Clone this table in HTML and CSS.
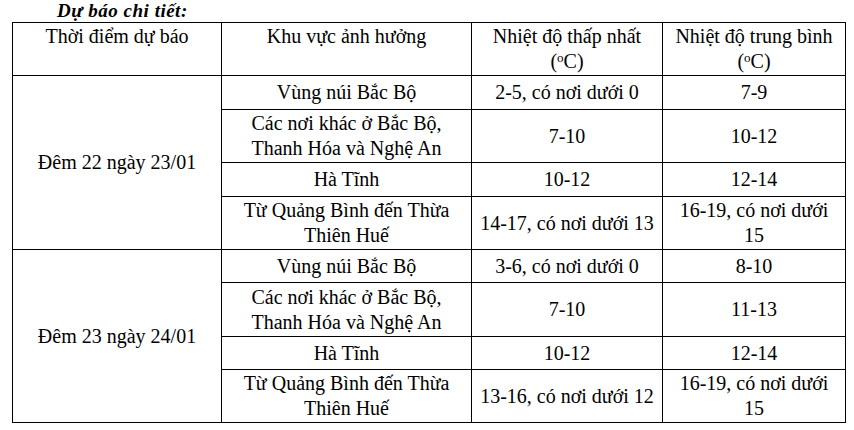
FILE: index.html
```html
<!DOCTYPE html>
<html lang="vi">
<head>
<meta charset="utf-8">
<title>Dự báo chi tiết</title>
<link rel="stylesheet" href="styles.css">
</head>
<body>
<div class="page">
  <p class="title">Dự báo chi tiết:</p>
  <table class="forecast">
    <colgroup>
      <col class="c1"><col class="c2"><col class="c3"><col class="c4">
    </colgroup>
    <tr class="head">
      <th>Thời điểm dự báo</th>
      <th>Khu vực ảnh hưởng</th>
      <th>Nhiệt độ thấp nhất<br>(<sup>o</sup>C)</th>
      <th>Nhiệt độ trung bình<br>(<sup>o</sup>C)</th>
    </tr>
    <tr class="r1">
      <td rowspan="4">Đêm 22 ngày 23/01</td>
      <td>Vùng núi Bắc Bộ</td>
      <td>2-5, có nơi dưới 0</td>
      <td>7-9</td>
    </tr>
    <tr class="r2">
      <td>Các nơi khác ở Bắc Bộ,<br>Thanh Hóa và Nghệ An</td>
      <td>7-10</td>
      <td>10-12</td>
    </tr>
    <tr class="r1">
      <td>Hà Tĩnh</td>
      <td>10-12</td>
      <td>12-14</td>
    </tr>
    <tr class="r2">
      <td>Từ Quảng Bình đến Thừa<br>Thiên Huế</td>
      <td>14-17, có nơi dưới 13</td>
      <td>16-19, có nơi dưới<br>15</td>
    </tr>
    <tr class="r3">
      <td rowspan="4">Đêm 23 ngày 24/01</td>
      <td>Vùng núi Bắc Bộ</td>
      <td>3-6, có nơi dưới 0</td>
      <td>8-10</td>
    </tr>
    <tr class="r4">
      <td>Các nơi khác ở Bắc Bộ,<br>Thanh Hóa và Nghệ An</td>
      <td>7-10</td>
      <td>11-13</td>
    </tr>
    <tr class="r3">
      <td>Hà Tĩnh</td>
      <td>10-12</td>
      <td>12-14</td>
    </tr>
    <tr class="r2">
      <td>Từ Quảng Bình đến Thừa<br>Thiên Huế</td>
      <td>13-16, có nơi dưới 12</td>
      <td>16-19, có nơi dưới<br>15</td>
    </tr>
  </table>
</div>
</body>
</html>
```

FILE: styles.css
```css
html, body {
  margin: 0;
  padding: 0;
  background: #ffffff;
}

body {
  font-family: "Liberation Serif", "Times New Roman", serif;
  color: #000000;
  font-size: 20px;
}

.page {
  padding: 0 0 0 12px;
}

.title {
  margin: 0 0 1px 0;
  padding-left: 45px;
  height: 21px;
  line-height: 21px;
  font-weight: bold;
  font-style: italic;
  font-size: 19px;
  letter-spacing: 0.5px;
}

.forecast {
  border-collapse: collapse;
  table-layout: fixed;
  width: 834px;
}

.c1 { width: 209px; }
.c2 { width: 250px; }
.c3 { width: 191px; }
.c4 { width: 183px; }

.forecast th,
.forecast td {
  border: 1px solid #000000;
  padding: 0 2px;
  text-align: center;
  line-height: 25px;
  font-weight: normal;
  white-space: nowrap;
}

.forecast th {
  vertical-align: top;
  padding-top: 1px;
}

.forecast td {
  vertical-align: middle;
}

.head { height: 53px; }
.r1 { height: 34px; }
.r2 { height: 53px; }
.r3 { height: 33px; }
.r4 { height: 54px; }

sup {
  font-size: 13px;
  line-height: 0;
  vertical-align: 6px;
}
```
